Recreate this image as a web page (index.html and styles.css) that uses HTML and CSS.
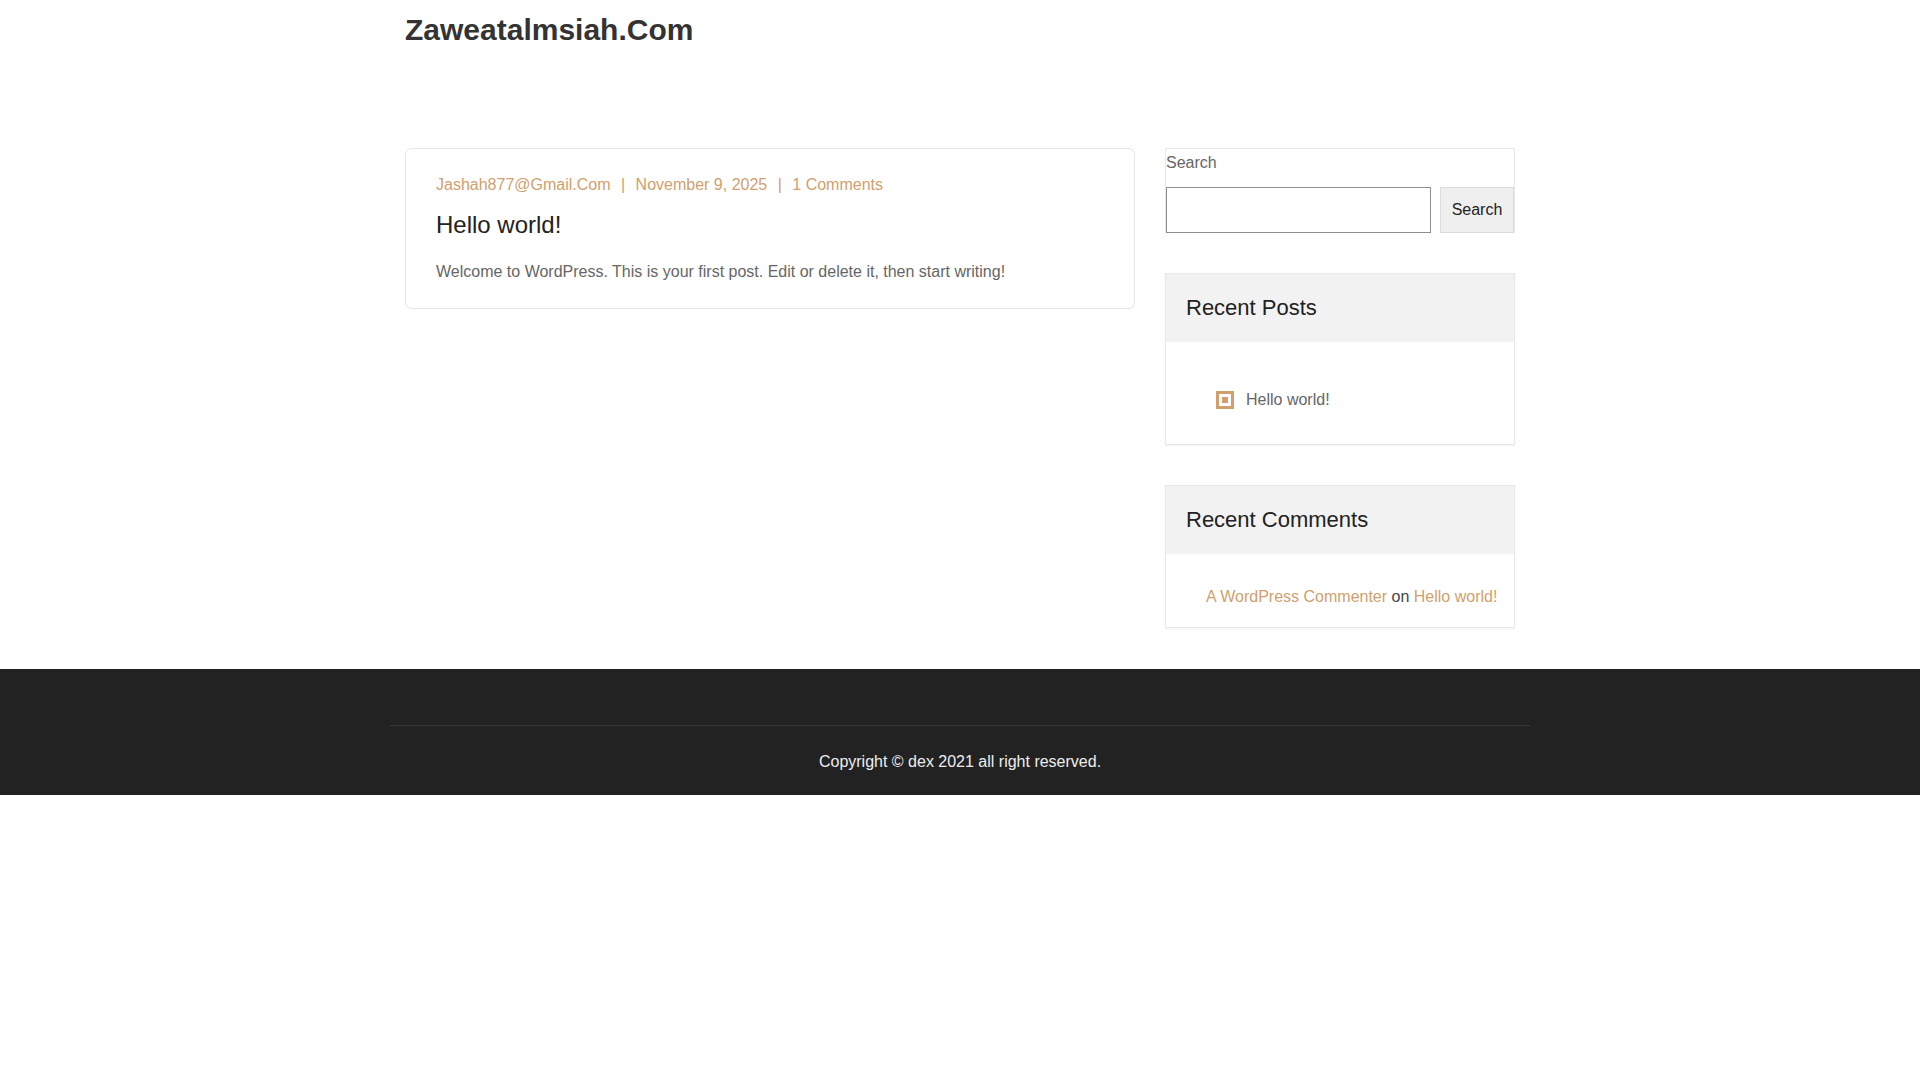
FILE: index.html
```html
<!DOCTYPE html>
<html lang="en">
<head>
    <meta charset="UTF-8">
    <meta name="viewport" content="width=device-width, initial-scale=1.0">
    <title>Zaweatalmsiah.Com</title>
    <link rel="stylesheet" href="styles.css">
</head>
<body>
    <header class="site-header">
        <div class="container">
            <h1 class="site-title"><a href="#">Zaweatalmsiah.Com</a></h1>
        </div>
    </header>

    <main class="site-main">
        <div class="container row">
            <div class="content-area">
                <article class="post-card">
                    <div class="post-meta">
                        <a href="#">Jashah877@Gmail.Com</a>
                        <span class="sep">|</span>
                        <a href="#">November 9, 2025</a>
                        <span class="sep">|</span>
                        <a href="#">1 Comments</a>
                    </div>
                    <h2 class="post-title"><a href="#">Hello world!</a></h2>
                    <p class="post-excerpt">Welcome to WordPress. This is your first post. Edit or delete it, then start writing!</p>
                </article>
            </div>

            <aside class="sidebar">
                <div class="widget widget-search">
                    <label for="s" class="search-label">Search</label>
                    <div class="search-row">
                        <input type="text" id="s" class="search-input">
                        <button class="search-button">Search</button>
                    </div>
                </div>

                <div class="widget">
                    <h3 class="widget-title">Recent Posts</h3>
                    <div class="widget-body posts-body">
                        <ul class="widget-list">
                            <li><span class="square-icon"></span><a href="#">Hello world!</a></li>
                        </ul>
                    </div>
                </div>

                <div class="widget">
                    <h3 class="widget-title">Recent Comments</h3>
                    <div class="widget-body comments-body">
                        <ul class="widget-list">
                            <li class="comment-item"><a href="#" class="accent">A WordPress Commenter</a> on <a href="#" class="accent">Hello world!</a></li>
                        </ul>
                    </div>
                </div>
            </aside>
        </div>
    </main>

    <footer class="site-footer">
        <div class="footer-inner">
            <div class="copyright">Copyright &copy; dex 2021 all right reserved.</div>
        </div>
    </footer>
</body>
</html>
```

FILE: styles.css
```css
body {
    font-family: 'Liberation Sans', Arial, sans-serif;
    margin: 0;
    padding: 0;
    background-color: #fff;
    color: #666;
    font-size: 16px;
    line-height: 24px;
}
a {
    text-decoration: none;
}
.container {
    width: 1110px;
    margin: 0 auto;
}
.row {
    display: flex;
    gap: 30px;
    align-items: flex-start;
}

/* header */
.site-header {
    padding-top: 12px;
}
.site-title {
    margin: 0;
    font-size: 30px;
    line-height: 36px;
    font-weight: bold;
}
.site-title a {
    color: #333;
}

/* main */
.site-main {
    padding: 100px 0 41px;
}
.content-area {
    width: 730px;
}
.post-card {
    border: 1px solid #e6e6e6;
    border-radius: 6px;
    padding: 24px 30px 24px;
}
.post-meta {
    color: #cf9f6e;
}
.post-meta a {
    color: #cf9f6e;
}
.post-meta .sep {
    margin: 0 6px;
}
.post-title {
    margin: 13px 0 0;
    font-size: 24px;
    line-height: 29px;
    font-weight: normal;
}
.post-title a {
    color: #222;
}
.post-excerpt {
    margin: 21px 0 0;
    color: #666;
}

/* sidebar */
.sidebar {
    width: 350px;
    display: flex;
    flex-direction: column;
    gap: 40px;
}
.widget {
    border: 1px solid #e8e8e8;
    box-shadow: 0 1px 2px rgba(0,0,0,0.06);
    background: #fff;
}
.widget-search {
    box-shadow: none;
    border-bottom: none;
}
.search-label {
    display: block;
    color: #666;
    line-height: 24px;
    padding-top: 2px;
}
.search-row {
    display: flex;
    gap: 9px;
    margin-top: 12px;
}
.search-input {
    flex: 1;
    height: 46px;
    box-sizing: border-box;
    border: 1px solid #8f8f8f;
    margin: 0;
    padding: 0 8px;
    font-size: 16px;
}
.search-button {
    width: 74px;
    height: 46px;
    box-sizing: border-box;
    background-color: #efefef;
    border: 1px solid #dcdcdc;
    color: #222;
    font-family: 'Liberation Sans', Arial, sans-serif;
    font-size: 16px;
    margin: 0;
    padding: 0;
}
.widget-title {
    margin: 0;
    background-color: #f2f2f2;
    padding: 21px 20px 21px;
    font-size: 22px;
    line-height: 26px;
    font-weight: normal;
    color: #222;
}
.widget-list {
    list-style: none;
    margin: 0;
    padding: 0 0 0 40px;
}
.posts-body {
    padding: 46px 0 32px;
}
.posts-body li {
    display: flex;
    align-items: center;
    padding-left: 10px;
}
.posts-body li a {
    color: #666;
}
.square-icon {
    width: 18px;
    height: 18px;
    box-sizing: border-box;
    border: 3px solid #cf9f6e;
    margin-right: 12px;
    display: flex;
    align-items: center;
    justify-content: center;
}
.square-icon::after {
    content: "";
    width: 6px;
    height: 6px;
    background-color: #cf9f6e;
}
.comments-body {
    padding: 31px 0 18px;
}
.comment-item {
    color: #444;
}
.accent {
    color: #cf9f6e;
}

/* footer */
.site-footer {
    background-color: #222;
    padding-top: 56px;
}
.footer-inner {
    width: 1140px;
    margin: 0 auto;
    border-top: 1px solid #353535;
}
.copyright {
    text-align: center;
    color: #eee;
    padding: 24px 0 21px;
}
```
